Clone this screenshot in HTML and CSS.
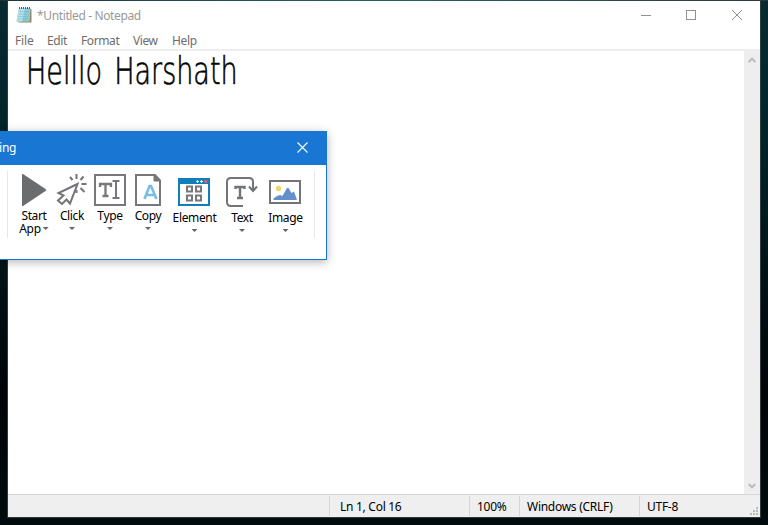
FILE: index.html
```html
<!DOCTYPE html>
<html lang="en">
<head>
<meta charset="utf-8">
<title>Notepad</title>
<link rel="stylesheet" href="styles.css">
</head>
<body>
<main class="notepad">
  <header class="titlebar">
    <svg class="app-icon" width="17" height="18" viewBox="0 0 17 18">
      <path d="M4 3H15.500V16.500H3L1 15Z" fill="#9b8a60"/>
      <path d="M3 2H14.500L13.500 15.500H0.500Z" fill="#8bcbd7"/>
      <path d="M3 2H9L6 15.500H0.500Z" fill="#b4e0e6"/>
      <path d="M3 5.500H13M3 8H13M2 10.500H12M2 13H12" stroke="#65afc0" stroke-width=".4"/>
      <path d="M3.500 1V3M5.500 1V3M7.500 1V3M9.500 1V3M11.500 1V3M13.500 1V3" stroke="#475b60"/>
    </svg>
    <span class="title">*Untitled - Notepad</span>
    <span class="controls">
      <svg width="120" height="12" viewBox="0 0 120 12" fill="none" stroke="#929292" shape-rendering="crispEdges"><path d="M9 5.500H19M54.500 .5H63.500V9.500H54.500Z"/><path d="M100 0L110 10M110 0L100 10" shape-rendering="auto"/></svg>
    </span>
  </header>
  <nav class="menu"><span class="m1">File</span><span class="m2">Edit</span><span class="m3">Format</span><span class="m4">View</span><span class="m5">Help</span></nav>
  <section class="editor">
    <div class="page"><span class="typed">Helllo Harshath</span></div>
    <div class="scroll">
      <svg width="8" height="6" viewBox="0 0 8 6" fill="none" stroke="#bcbcbc" stroke-width="2"><path d="M.7 5L4 1.700L7.300 5"/></svg>
      <svg width="8" height="6" viewBox="0 0 8 6" fill="none" stroke="#bcbcbc" stroke-width="2"><path d="M.7 1L4 4.300L7.300 1"/></svg>
    </div>
  </section>
  <footer class="status">
    <span class="cell pos"><b>Ln 1, Col 16</b></span><span class="cell zoom"><b>100%</b></span><span class="cell eol"><b>Windows (CRLF)</b></span><span class="cell enc"><b>UTF-8</b></span>
    <svg class="grip" width="8" height="8" fill="#b9b9b9" viewBox="0 0 8 8"><path d="M6 0h2v2h-2zM3 3h2v2h-2zM6 3h2v2h-2zM0 6h2v2h-2zM3 6h2v2h-2zM6 6h2v2h-2z"/></svg>
  </footer>
</main>
<aside class="dialog">
  <div class="dialog-title"><span>ing</span>
    <svg width="11" height="11" viewBox="0 0 11 11" stroke="#fff" stroke-width="1.100"><path d="M.5 .5L10.500 10.500M10.500 .5L.5 10.500"/></svg>
  </div>
  <div class="tools">
    <div class="tool start"><svg width="34" height="34" viewBox="0 0 34 34"><path d="M5 1H6L28.500 16Q30 17 28.500 18L6 33H5Z" fill="#6a6c6e"/></svg><span>Start</span><span class="app">App <i class="arrow"></i></span></div>
    <div class="tool click"><svg width="34" height="34" viewBox="0 0 34 34" fill="none" stroke="#727477" stroke-width="2"><path d="M22.500 11L3.500 20L8.500 22.500L3 27.500L7 31L11.500 26.500L15 30.500Z"/><path d="M15 4L17.500 7M21.500 1V6M28.500 3.500L25.500 7M26.500 11H31.500M25.500 15L29.500 19M21.500 17V20"/></svg><span>Click</span><i class="arrow"></i></div>
    <div class="tool type"><svg width="34" height="34" viewBox="0 0 34 34" fill="none" stroke="#77787b" stroke-width="2"><path d="M2 2H32V32H2Z"/><path d="M7 14V11H18V14M12.500 11V23M9.500 23H15.500" stroke-width="2.300"/><path d="M19.500 8H26.500M23 8V25M19.500 25H26.500"/></svg><span>Type</span><i class="arrow"></i></div>
    <div class="tool copy"><svg width="34" height="34" viewBox="0 0 34 34" fill="none"><path d="M5 2H24L29 7.500V32H5Z" stroke="#77787b" stroke-width="2"/><path d="M23 2V8H29" fill="#77787b" stroke="#77787b"/><path d="M13.500 26L18.500 13H20L25.500 26M15 22H24" stroke="#78bde7" stroke-width="2.600"/></svg><span>Copy</span><i class="arrow"></i></div>
    <div class="tool element"><svg width="34" height="34" viewBox="0 0 34 34"><path d="M1 5H33V33H1Z" fill="#107ebb"/><path d="M3 11H31V31H3Z" fill="#fff"/><path d="M10 13.500H15V18.500H10ZM19 13.500H24V18.500H19ZM10 22.500H15V27.500H10ZM19 22.500H24V27.500H19Z" fill="none" stroke="#77787b" stroke-width="2"/><path d="M19 8.500h3M20.500 7v3M23 8.500h3M24.500 7v3" stroke="#d8eff9"/><circle cx="28.800" cy="8.500" r="1.700" fill="#f05765"/></svg><span>Element</span><i class="arrow"></i></div>
    <div class="tool text"><svg width="34" height="34" viewBox="0 0 34 34" fill="none" stroke="#727477" stroke-width="2"><path d="M18 33H6Q2 33 2 29V9Q2 5 6 5H24Q28 5 28 9V17M24 13.500L28 18L32 13.500"/><path d="M10.500 16V14H19.500V16M15 14V25M12 25H18" stroke-width="2.400"/></svg><span>Text</span><i class="arrow"></i></div>
    <div class="tool image"><svg width="34" height="34" viewBox="0 0 34 34"><path d="M2 8H32V30H2Z" fill="#fff" stroke="#727477" stroke-width="2"/><circle cx="10.500" cy="15.500" r="2.700" fill="#efd66c"/><path d="M5.500 27V25.500L9 23L12 22L14.500 23L19 15L20.500 15L23.500 20L26 18.500L29 27Z" fill="#638fca"/></svg><span>Image</span><i class="arrow"></i></div>
  </div>
</aside>
</body>
</html>
```

FILE: styles.css
```css
* { box-sizing: border-box; }
body {
  margin: 0; width: 768px; height: 525px; padding: 1px 8px 8px;
  overflow: hidden; position: relative;
  font: 12px/16px "Noto Sans", sans-serif;
  background: linear-gradient(#082b32, #002529 25%, #001216 52%, #000407 75%, #000b0e);
}
body::before { content: ""; position: absolute; left: 0; top: 0; width: 768px; height: 1px; background: linear-gradient(90deg, #20353d, #23606b 50%, #30383d); }
.notepad { width: 752px; height: 516px; background: #fff; display: flex; flex-direction: column; box-shadow: 0 0 0 1px #303b3e; }
.titlebar { height: 30px; display: flex; color: #999; }
.app-icon { margin: 5px 4px 0 8px; }
.title { margin-top: 7px; letter-spacing: -.37px; white-space: nowrap; }
.controls { margin: 9px 0 0 auto; width: 128px; }
.controls svg { display: block; }
.menu { height: 18px; display: flex; color: #6d6d6d; padding: 2px 0 0 7px; white-space: nowrap; }
.m1 { width: 32px; letter-spacing: -.15px; }
.m2 { width: 34px; letter-spacing: -.4px; }
.m3 { width: 52px; letter-spacing: -.4px; }
.m4 { width: 39px; letter-spacing: -.4px; }
.m5 { letter-spacing: -.3px; }
.editor { height: 445px; border-top: 2px solid #eee; display: flex; }
.page { width: 736px; padding: 1px 0 0 18px; }
.typed { display: block; width: 330px; height: 42px; font: 200 37px/40px "DejaVu Sans", "DejaVu Sans Light", sans-serif; word-spacing: 5px; color: #000; -webkit-text-stroke: .6px #000; transform: scaleX(.73); transform-origin: left top; white-space: nowrap; }
.scroll { width: 16px; background: #eee; display: flex; flex-direction: column; justify-content: space-between; padding: 6px 4px 5px; }
.status { height: 23px; background: #efefef; border-top: 1px solid #d5d5d5; display: flex; padding-left: 321px; }
.cell { height: 20px; margin-top: 1px; padding: 3px 0 0 7px; border-left: 1px solid #d5d5d5; white-space: nowrap; }
.cell b { font-weight: 400; letter-spacing: -.28px; }
.pos { width: 140px; padding-left: 10px; }
.zoom { width: 50px; }
.eol { width: 120px; }
.enc { width: 110px; }
.grip { margin: 12px 0 0 1px; }
.dialog { position: absolute; left: -4px; top: 131px; width: 331px; height: 129px; border: 1px solid #1976d2; background: #fff; box-shadow: 0 2px 9px rgba(0,0,0,.3); }
.dialog-title { height: 33px; background: #1976d2; color: #fff; display: flex; justify-content: space-between; padding: 8px 18px 0 2px; }
.dialog-title span { letter-spacing: -.2px; }
.dialog-title svg { margin-top: 2px; }
.tools { margin: 6px 11px 0 10px; height: 67px; border-left: 1px solid #e7e7e7; border-right: 1px solid #e7e7e7; display: flex; padding: 2px 0 0 7px; }
.tool { width: 38px; display: flex; flex-direction: column; align-items: center; line-height: 13px; letter-spacing: -.35px; white-space: nowrap; }
.tool > span { margin-top: 2px; }
.tool svg { flex: none; }
.arrow { width: 6px; height: 3px; background: #666; clip-path: polygon(0 0, 100% 0, 50% 100%); margin-top: 5px; }
.tool > .app { margin-top: 0; display: flex; gap: 2px; }
.app .arrow { margin-top: 5px; }
.element { width: 55px; }
.text { width: 40px; }
.image { width: 47px; }
.element > svg, .image > svg { margin-left: -1px; }
.element > span, .text > span, .image > span { margin-top: 4px; }
```
